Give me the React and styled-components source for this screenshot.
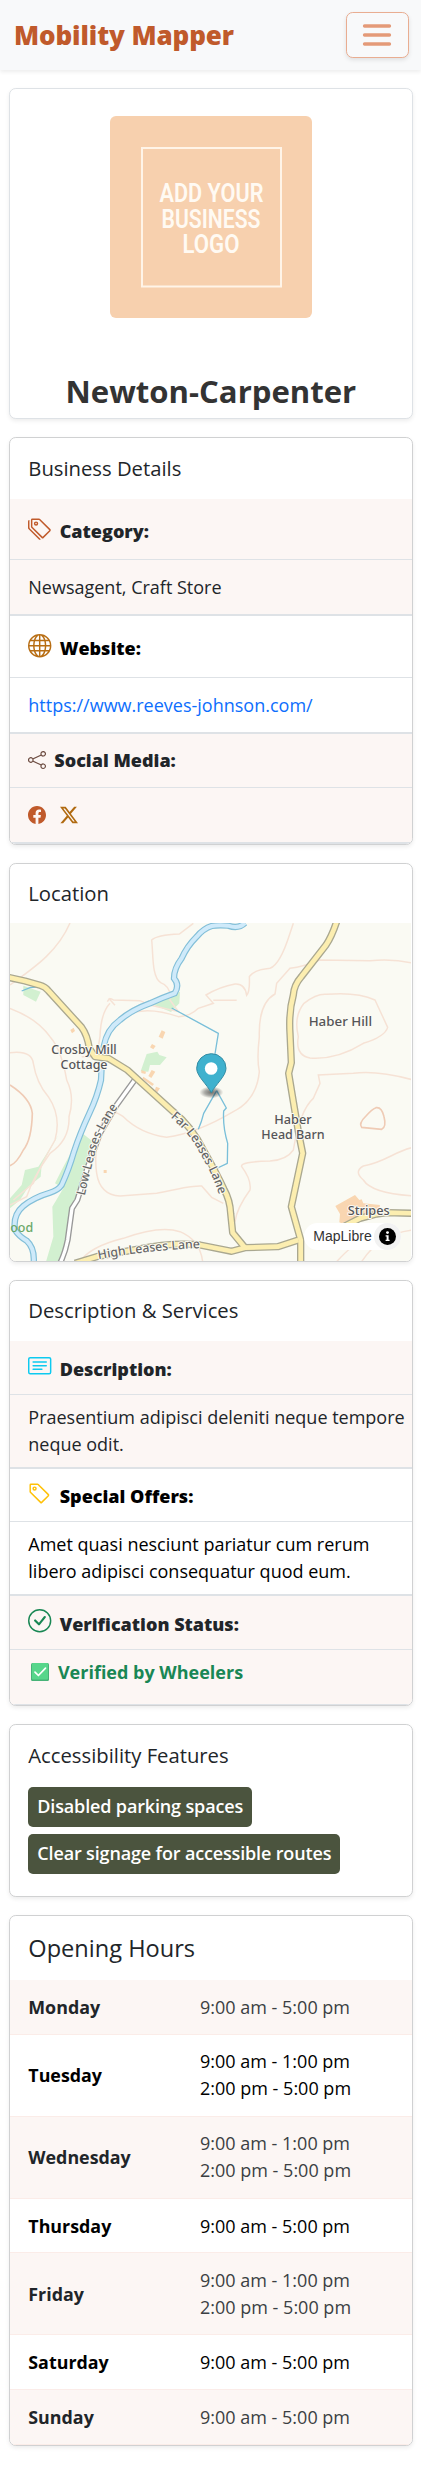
import React from 'react';
import styled, { createGlobalStyle } from 'styled-components';
import {
  BsTags, BsGlobe, BsShare, BsFacebook, BsTwitterX, BsCardText, BsTag, BsCheckCircle,
} from 'react-icons/bs';

const GlobalStyle = createGlobalStyle`
  *, *::before, *::after { box-sizing: border-box; }
  body {
    margin: 0;
    background: #fff;
    color: #212529;
    font: 400 18px/27px "Open Sans", "Noto Sans", sans-serif;
  }
`;

const Navbar = styled.nav`
  display: flex;
  align-items: center;
  justify-content: space-between;
  height: 70px;
  padding: 0 12.5px 0 14px;
  background: #f8f9fa;
  box-shadow: 0 2px 4px rgba(0, 0, 0, 0.075);
`;

const Brand = styled.a`
  color: #c05a2b;
  font-size: 26px;
  font-weight: 800;
  letter-spacing: -0.1px;
  line-height: 39px;
`;

const Toggler = styled.button`
  display: flex;
  align-items: center;
  justify-content: center;
  width: 62.5px;
  height: 45.5px;
  padding: 0;
  border: 1px solid #e9ad91;
  border-radius: 6.75px;
  background: #f8f9fa;
  box-shadow: 0 2px 4px rgba(0, 0, 0, 0.1);
`;

const Page = styled.main`
  display: flex;
  flex-direction: column;
  gap: 18.6px;
  padding: 18px 8.5px 25px 9.3px;
`;

const Card = styled.section`
  display: flex;
  flex-direction: column;
  height: ${(p) => p.$height}px;
  border: 1px solid ${(p) => (p.$soft ? '#dee2e6' : '#d0d1d2')};
  border-radius: 6.75px;
  background: #fff;
  box-shadow: 0 2px 4px rgba(0, 0, 0, 0.075);
  overflow: hidden;
`;

const LogoTile = styled.svg`
  display: block;
  flex: none;
  width: 202px;
  height: 202px;
  margin: 27px auto 0;
  border-radius: 6px;
`;

const BusinessName = styled.h1`
  margin: 52px 0 0;
  color: #333;
  font-size: 31.1px;
  font-weight: 700;
  line-height: 42px;
  text-align: center;
`;

const CardTitle = styled.h2`
  flex: none;
  display: flex;
  align-items: center;
  height: ${(p) => p.$height}px;
  margin: 0;
  padding: 0 18px ${(p) => p.$bottom || 0}px;
  font-size: ${(p) => p.$size || 20.25}px;
  font-weight: 400;
  line-height: 1.2;
`;

const Row = styled.div`
  flex: none;
  display: flex;
  align-items: center;
  height: ${(p) => p.$height}px;
  padding: ${(p) => p.$top || 0}px 0 ${(p) => p.$bottom || 0}px 18px;
  border-bottom: ${(p) => (p.$last ? 2 : 1)}px solid #dee2e6;
  background: ${(p) => (p.$striped ? '#fcf6f4' : '#fff')};
  color: ${(p) => (p.$striped ? '#212529' : '#000')};
`;

const LabelRow = styled(Row)`
  gap: 8px;
  font-weight: 800;

  svg {
    flex: none;
    width: ${(p) => p.$icon || 23.4}px;
    height: ${(p) => p.$icon || 23.4}px;
    margin-top: ${(p) => p.$lift || 0}px;
    color: ${(p) => p.$color};
  }
`;

const Link = styled.a`
  color: #0d6efd;
`;

const SocialLinks = styled.div`
  display: flex;
  gap: 14px;
`;

const Verified = styled.span`
  display: flex;
  align-items: center;
  gap: 8.6px;
  padding-left: 3px;
  color: #198754;
  font-weight: 700;
`;

const MapFrame = styled.div`
  position: relative;
  width: 401px;
  height: 338px;

  > svg { display: block; }
`;

const Attribution = styled.div`
  position: absolute;
  right: 10px;
  bottom: 11px;
  display: flex;
  align-items: center;
  justify-content: space-between;
  width: 97px;
  height: 27px;
  padding-left: 9px;
  border-radius: 14px;
  background: #fff;
  color: #333;
  font: 14px/20px "Liberation Sans", Arial, sans-serif;
`;

const InfoDot = styled.span`
  display: flex;
  align-items: center;
  justify-content: center;
  width: 27px;
  height: 27px;
  border-radius: 50%;
  background: #f2f2f2;
`;

const Badges = styled.div`
  display: flex;
  flex-direction: column;
  align-items: flex-start;
  gap: 6.4px;
  padding-left: 18px;
`;

const Badge = styled.span`
  height: 40px;
  padding: 0 9px;
  border-radius: 5px;
  background: #4b543e;
  color: #fff;
  font-size: 18px;
  font-weight: 600;
  letter-spacing: -0.15px;
  line-height: 39px;
`;

const HoursRow = styled.div`
  flex: none;
  display: grid;
  grid-template-columns: 171.7px 1fr;
  align-items: center;
  height: ${(p) => p.$height}px;
  padding: ${(p) => p.$top || 0}px 0 0 18px;
  border-bottom: 1px solid #fbece8;
  background: ${(p) => (p.$striped ? '#fcf6f4' : '#fff')};
  color: ${(p) => (p.$striped ? '#3b3f43' : '#000')};
`;

const Day = styled.span`
  color: ${(p) => (p.$striped ? '#212529' : '#000')};
  font-size: 17.85px;
  font-weight: 700;
`;

const Times = styled.div`
  display: flex;
  flex-direction: column;
`;

const HOURS = [
  ['Monday', 54.7, 0.8, ['9:00 am - 5:00 pm']],
  ['Tuesday', 81.8, 0.4, ['9:00 am - 1:00 pm', '2:00 pm - 5:00 pm']],
  ['Wednesday', 82, 0, ['9:00 am - 1:00 pm', '2:00 pm - 5:00 pm']],
  ['Thursday', 54.7, 1.4, ['9:00 am - 5:00 pm']],
  ['Friday', 82, 1.2, ['9:00 am - 1:00 pm', '2:00 pm - 5:00 pm']],
  ['Saturday', 54.6, 1.4, ['9:00 am - 5:00 pm']],
  ['Sunday', 55.6, 1.4, ['9:00 am - 5:00 pm']],
];

function Logo() {
  const word = {
    fill: '#fffaf3', fontFamily: 'Roboto, sans-serif', fontWeight: 600, fontSize: 25,
    textAnchor: 'middle', lengthAdjust: 'spacingAndGlyphs',
  };
  return (
    <LogoTile viewBox="0 0 202 202">
      <rect width="202" height="202" fill="#f7d0ae" />
      <rect x="32" y="32" width="139" height="138.5" fill="none" stroke="#fff4e8" strokeWidth="2" />
      <text x="101.5" y="86" textLength="104" {...word}>ADD YOUR</text>
      <text x="101" y="111.7" textLength="99" {...word}>BUSINESS</text>
      <text x="101" y="137.2" textLength="57" {...word}>LOGO</text>
    </LogoTile>
  );
}

const RIVER = 'M735 219 Q715 238 685 227 Q655 224 635 228 Q610 236 590 260 Q560 290 545 325 Q522 355 522 385 Q540 405 524 430 Q490 442 450 460 Q395 480 360 510 Q320 538 311 590 Q304 640 303 690 Q292 740 268 790 Q240 850 222 905 Q206 960 185 1005 Q175 1020 150 1028 Q100 1043 70 1068 Q38 1095 45 1140 Q58 1160 80 1172 Q105 1195 101 1240';
const ROADS = [
  'M25 382 L75 393 L120 406 Q135 410 145 422 L245 532 Q262 555 268 595 L285 620 L325 625 L382 660 L520 785 Q575 830 610 900 Q650 970 672 1018 Q690 1050 692 1090 L698 1148 L735 1193',
  'M225 1240 L290 1220 L410 1198 Q520 1176 600 1185 L695 1204 L735 1193 L833 1190 L895 1170',
  'M1010 215 Q995 260 978 285 L904 380 Q882 405 880 435 Q866 485 870 550 L874 638 L866 670 L880 755 L896 850 L908 910 L874 1070 L902 1170 L902 1240',
  'M1030 1130 L1080 1105 L1130 1092 L1160 1088 L1240 1090',
];
const LANE = 'M404 690 L350 765 L300 850 L260 960 L232 1050 L216 1075 L203 1170 Q195 1210 180 1240';

const CONTOURS = [
  'M210 219 C175 300 115 345 30 405',
  'M580 220 L538 252 Q470 255 455 270 C460 315 455 380 482 398 Q515 410 510 450 L535 485 L450 465 L420 452 L340 450 Q330 440 322 455 M326 445 L345 466',
  'M330 460 Q302 490 300 560 L290 620 L245 620',
  'M390 490 Q450 470 535 500 Q570 500 595 475 L640 460 L618 435 Q660 410 705 402 Q735 400 740 436 Q750 425 748 380 Q760 360 810 355 Q840 345 870 250 L880 220',
  'M640 451 L710 451',
  'M1240 340 Q1180 325 1110 332 L960 330 Q910 350 870 355 L830 400 L825 432 Q775 460 778 560 Q770 630 778 665 Q770 750 700 785 Q590 850 500 862 Q420 850 370 800 Q325 765 305 820 Q280 900 290 970 Q300 1035 360 1038 L470 1030 Q580 1005 605 1008 L635 1042 L670 1060',
  'M912 460 Q950 430 980 433 Q1070 425 1125 450 L1163 532 Q1155 560 1090 580 Q1010 630 930 624 Q885 615 895 560 Q880 500 912 460 Z',
  'M1240 690 Q1130 660 1060 670 L955 675 L960 700 L940 745 Q900 780 880 900 Q860 930 810 933 Q720 935 725 950 Q755 990 750 1020 Q710 1075 705 1115',
  'M1240 892 C1180 905 1160 935 1090 948 Q1060 965 1090 990 Q1115 1030 1240 1038',
  'M30 475 Q110 505 150 560 Q185 600 200 690 Q225 740 207 800 Q210 870 150 910 Q100 980 80 1040 L30 1065',
  'M30 608 Q95 600 100 640 Q110 700 145 740 Q185 800 165 870 Q125 940 100 1000 L40 1050',
  'M240 1235 Q270 1190 370 1165 Q480 1125 540 1145 Q600 1170 608 1235',
  'M1010 1235 Q1060 1180 1070 1190 M1085 1235 Q1140 1150 1240 1140',
];

function LocationMap() {
  const label = {
    fill: '#555558', stroke: '#fbfaf3', strokeWidth: 6, paintOrder: 'stroke', strokeLinejoin: 'round',
    fontFamily: '"Noto Sans", sans-serif', fontSize: 40, fontWeight: 500, textAnchor: 'middle',
    lengthAdjust: 'spacingAndGlyphs',
  };
  const lane = { ...label, fontSize: 37, fill: '#666', textAnchor: 'start' };
  return (
    <svg width="401" height="338" viewBox="30 219 1203 1014">
      <defs>
        <path id="low-leases" d="M254 1037 Q272 960 289 895 Q310 830 364 757" />
        <path id="far-leases" d="M511 802 Q573 852 605 920 Q638 974 658 1036" />
        <path id="high-leases" d="M296 1228 Q430 1202 604 1194" />
        <radialGradient id="pin-shadow">
          <stop offset="0" stopColor="#000" stopOpacity="0.55" />
          <stop offset="0.55" stopColor="#000" stopOpacity="0.32" />
          <stop offset="1" stopColor="#000" stopOpacity="0" />
        </radialGradient>
      </defs>
      <rect x="30" y="219" width="1203" height="1014" fill="#fafaf3" />
      <g fill="#d2f0d0">
        <path d="M70 407 L122 425 L108 455 L70 435Z" />
        <path d="M455 462 L540 425 L538 460 L513 486Z" />
        <path d="M440 612 L472 605 L478 615 L500 622 L480 645 L450 645 L445 665 L422 664Z" />
        <path d="M245 848 L285 880 L272 940 L240 990 L225 1050 L212 1080 L200 1160 L185 1235 L138 1235 L160 1160 L157 1070 L190 1015 L165 1000 L185 960Z" />
        <path d="M175 855 L125 945 L122 980 L85 1010 L60 1050 L30 1075 L30 1045 L65 1005 L75 960 L115 950Z" />
      </g>
      <g fill="none" stroke="#f6e2d5" strokeWidth="4.5">
        {CONTOURS.map((d) => <path key={d} d={d} />)}
      </g>
      <g fill="none" stroke="#efcbb5" strokeWidth="5">
        <path d="M30 705 Q92 745 97 790 Q95 870 70 900 Q50 940 30 947" />
        <path d="M1128 773 Q1145 770 1152 800 Q1160 830 1145 838 L1085 832 Q1075 820 1098 798 Q1115 778 1128 773Z" />
      </g>
      <g fill="#f9d6b1">
        <path d="M485 541 L496 546 L488 566 L476 560Z M456 582 L467 588 L460 598 L450 592Z M455 660 L466 665 L454 684 L445 678Z M430 680 L462 702 L457 708 L427 686Z M468 710 L480 715 L472 727 L464 722Z M424 660 L438 665 L436 672 L424 669Z" />
        <path d="M211 540 L221 533 L225 543 L216 550Z M311 960 L320 960 L320 969 L311 969Z" />
        <path d="M1006 1068 L1065 1035 L1078 1050 L1085 1048 L1090 1060 L1140 1065 L1135 1090 L1075 1100 L1025 1120 L1018 1117 L1020 1092Z" />
      </g>
      <g fill="none" stroke="#79bfd9" strokeWidth="4" strokeLinejoin="round">
        <path d="M515 474 L655 550 L645 612 M650 722 L611 790 Q605 815 595 838 M650 722 L679 774 L671 783 Q668 830 683 880 L682 940 L640 960" />
        <path d="M65 423 L90 413 L108 411" />
      </g>
      <path d={RIVER} fill="none" stroke="#83bfd8" strokeWidth="19" />
      <path d={RIVER} fill="none" stroke="#cfeafa" strokeWidth="12" />
      <path d={LANE} fill="none" stroke="#999" strokeWidth="18" />
      <path d={LANE} fill="none" stroke="#fff" strokeWidth="10" />
      <g fill="none" stroke="#aaa890" strokeWidth="22" strokeLinejoin="round">
        {ROADS.map((d) => <path key={d} d={d} />)}
      </g>
      <g fill="none" stroke="#fceeb0" strokeWidth="14" strokeLinejoin="round">
        {ROADS.map((d) => <path key={d} d={d} />)}
      </g>
      <text {...label} x="252" y="611" textLength="196">Crosby Mill</text>
      <text {...label} x="252" y="656" textLength="141">Cottage</text>
      <text {...label} x="1021" y="527" textLength="190">Haber Hill</text>
      <text {...label} x="879" y="823" textLength="112">Haber</text>
      <text {...label} x="879" y="866" textLength="190">Head Barn</text>
      <text {...label} x="1106" y="1095" textLength="126">Stripes</text>
      <text {...label} x="65" y="1145" textLength="69" fill="#6aa869" stroke="none">ood</text>
      <text {...lane} textLength="286"><textPath href="#low-leases">Low Leases Lane</textPath></text>
      <text {...lane} textLength="278"><textPath href="#far-leases">Far Leases Lane</textPath></text>
      <text {...lane} textLength="306"><textPath href="#high-leases">High Leases Lane</textPath></text>
      <ellipse cx="634" cy="727" rx="36" ry="18" fill="url(#pin-shadow)" />
      <path d="M634 728 C620 702 590 678 590 655 A44 44 0 0 1 678 655 C678 678 648 702 634 728Z" fill="#3fb1ce" stroke="#318ba3" strokeWidth="3" />
      <circle cx="633.5" cy="655.5" r="19" fill="#fff" />
    </svg>
  );
}

export default function App() {
  return (
    <>
      <GlobalStyle />
      <Navbar>
        <Brand>Mobility Mapper</Brand>
        <Toggler aria-label="Toggle navigation">
          <svg width="34" height="34" viewBox="0 0 30 30">
            <path d="M4 7h22M4 15h22M4 23h22" stroke="#e49a78" strokeWidth="3" strokeLinecap="round" />
          </svg>
        </Toggler>
      </Navbar>
      <Page>
        <Card $height={330.6} $soft>
          <Logo />
          <BusinessName>Newton-Carpenter</BusinessName>
        </Card>

        <Card $height={407.4}>
          <CardTitle $height={60.4}>Business Details</CardTitle>
          <LabelRow $striped $height={61} $top={6} $lift={-6} $color="#c05a2b"><BsTags />Category:</LabelRow>
          <Row $striped $last $height={56} $top={1.6}>Newsagent, Craft Store</Row>
          <LabelRow $height={62} $top={5} $lift={-5} $color="#b86e14"><BsGlobe />Website:</LabelRow>
          <Row $last $height={56} $top={1.4}><Link>https://www.reeves-johnson.com/</Link></Row>
          <LabelRow $striped $height={54} $top={1.4} $icon={18} $lift={-1} $color="#6d4c41"><BsShare />Social Media:</LabelRow>
          <Row $striped $last $height={56.5}>
            <SocialLinks>
              <BsFacebook size={18} color="#c05a2b" />
              <BsTwitterX size={18} color="#b06a10" />
            </SocialLinks>
          </Row>
        </Card>

        <Card $height={398.4}>
          <CardTitle $height={58.6}>Location</CardTitle>
          <MapFrame>
            <LocationMap />
            <Attribution>
              MapLibre
              <InfoDot>
                <svg width="17" height="17" viewBox="0 0 17 17">
                  <circle cx="8.5" cy="8.5" r="8.5" />
                  <path d="M6.6 7.2h3v4.6h1v1.2H6.6v-1.2h1V8.4h-1z" fill="#fff" />
                  <circle cx="8.5" cy="4.6" r="1.4" fill="#fff" />
                </svg>
              </InfoDot>
            </Attribution>
          </MapFrame>
        </Card>

        <Card $height={425.6}>
          <CardTitle $height={59.8} $bottom={1.6}>Description &amp; Services</CardTitle>
          <LabelRow $striped $height={54} $top={3.4} $lift={-7} $color="#0dcaf0"><BsCardText />Description:</LabelRow>
          <Row $striped $last $height={74}>
            <span>Praesentium adipisci deleniti neque tempore<br />neque odit.</span>
          </Row>
          <LabelRow $height={53} $top={4} $lift={-7} $color="#ffc107"><BsTag />Special Offers:</LabelRow>
          <Row $last $height={74}>
            <span>Amet quasi nesciunt pariatur cum rerum<br />libero adipisci consequatur quod eum.</span>
          </Row>
          <LabelRow $striped $height={54} $top={4} $lift={-7} $color="#198754"><BsCheckCircle />Verification Status:</LabelRow>
          <Row $striped $last $height={56} $bottom={9}>
            <Verified>
              <svg width="18" height="18" viewBox="0 0 18 18">
                <rect width="18" height="18" rx="1.5" fill="#46b377" />
                <rect x="1" width="16" height="16.5" rx="1" fill="#57d68b" />
                <path d="M4 9.2l3.4 3.3L14.5 5.2" fill="none" stroke="#fff" strokeWidth="1.7" strokeLinecap="round" strokeLinejoin="round" />
              </svg>
              Verified by Wheelers
            </Verified>
          </Row>
        </Card>

        <Card $height={172.4}>
          <CardTitle $height={61.8} $bottom={3}>Accessibility Features</CardTitle>
          <Badges>
            <Badge>Disabled parking spaces</Badge>
            <Badge>Clear signage for accessible routes</Badge>
          </Badges>
        </Card>

        <Card $height={531}>
          <CardTitle $height={63.8} $size={23.6}>Opening Hours</CardTitle>
          {HOURS.map(([day, height, top, slots], i) => (
            <HoursRow key={day} $height={height} $top={top} $striped={i % 2 === 0}>
              <Day $striped={i % 2 === 0}>{day}</Day>
              <Times>{slots.map((slot) => <span key={slot}>{slot}</span>)}</Times>
            </HoursRow>
          ))}
        </Card>
      </Page>
    </>
  );
}
